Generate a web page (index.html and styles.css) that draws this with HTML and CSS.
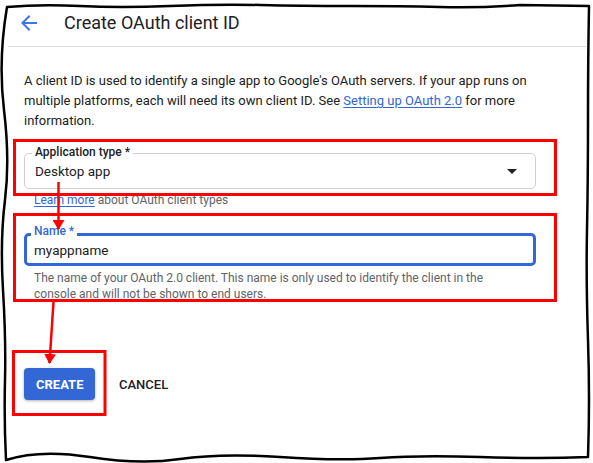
FILE: index.html
```html
<!DOCTYPE html>
<html lang="en">
<head>
<meta charset="utf-8">
<title>Create OAuth client ID</title>
<link rel="stylesheet" href="styles.css">
</head>
<body>
<div class="page">
  <div class="sheet">
    <header class="topbar">
      <svg class="back" width="24" height="24" viewBox="0 0 24 24" aria-hidden="true">
        <path d="M20 11H7.83l5.59-5.59L12 4l-8 8 8 8 1.41-1.41L7.83 13H20v-2z"/>
      </svg>
      <h1 class="title">Create OAuth client ID</h1>
    </header>
    <main class="content">
      <p class="intro">A client ID is used to identify a single app to Google's OAuth servers. If your app runs on multiple platforms, each will need its own client ID. See <a class="link" href="#">Setting up OAuth 2.0</a> for more information.</p>

      <div class="field select-field">
        <span class="field-label">Application type *</span>
        <span class="field-value">Desktop app</span>
        <span class="caret"></span>
      </div>
      <div class="hint"><a class="hint-link" href="#">Learn more</a> about OAuth client types</div>

      <div class="field input-field">
        <span class="field-label focused">Name *</span>
        <span class="field-value">myappname</span>
      </div>
      <div class="helper">The name of your OAuth 2.0 client. This name is only used to identify the client in the console and will not be shown to end users.</div>

      <div class="actions">
        <button class="btn btn-primary">CREATE</button>
        <button class="btn btn-text">CANCEL</button>
      </div>
    </main>
  </div>

  <svg class="overlay" width="593" height="463" viewBox="0 0 593 463" aria-hidden="true">
    <defs>
      <marker id="head" viewBox="0 0 10 12" refX="9" refY="6" markerWidth="10" markerHeight="12" markerUnits="userSpaceOnUse" orient="auto">
        <path d="M0 0 L10 6 L0 12 z" fill="#ff0000"/>
      </marker>
    </defs>
    <g fill="none" stroke="#ff0000" stroke-width="3">
      <rect x="14.5" y="140.5" width="541" height="54"/>
      <rect x="14.5" y="214.5" width="541" height="86"/>
      <rect x="13.5" y="351.5" width="91.5" height="63"/>
    </g>
    <g stroke="#ff0000" stroke-width="2.5" fill="none">
      <line x1="58.5" y1="182" x2="58.5" y2="229" marker-end="url(#head)"/>
      <line x1="53.5" y1="302" x2="49.5" y2="363" marker-end="url(#head)"/>
    </g>
    <path class="frame-line" d="M7 7 Q40 4 80 6 T170 6 T260 5 T350 6 T440 7 T520 5 L589 6 Q588 60 588 120 T587 230 T588 340 T588 457 Q540 459 480 457 T380 458 T280 457 T180 459 T90 457 T6 460 Q4 420 5 380 T3 290 T5 200 T4 110 T7 7 Z"/>
  </svg>
</div>
</body>
</html>
```

FILE: styles.css
```css
html, body {
  margin: 0;
  padding: 0;
  background: #ffffff;
}

body {
  font-family: Roboto, "Liberation Sans", Arial, sans-serif;
  color: #202124;
}

.page {
  position: relative;
  width: 593px;
  height: 463px;
  overflow: hidden;
  background: #ffffff;
}

.sheet {
  margin: 0 7px 0 8px;
}

.topbar {
  display: flex;
  align-items: center;
  height: 47px;
  border-bottom: 1px solid #dadce0;
  box-sizing: border-box;
  padding-left: 9px;
}

.back {
  fill: #3b78e7;
  flex: none;
}

.title {
  margin: 0 0 0 23px;
  font-size: 18px;
  font-weight: 400;
  color: #202124;
  line-height: 24px;
}

.content {
  padding: 24px 0 0 16px;
}

.intro {
  margin: 0;
  width: 548px;
  font-size: 13px;
  line-height: 20px;
  color: #202124;
}

.link {
  color: #3367d6;
  text-decoration: underline;
  text-underline-offset: 2px;
}

.field {
  position: relative;
  width: 512px;
  box-sizing: border-box;
  display: flex;
  align-items: center;
}

.select-field {
  margin-top: 22px;
  height: 36px;
  border: 1px solid #cfcfcf;
  border-radius: 5px;
  padding: 0 10px;
}

.input-field {
  margin-top: 25px;
  height: 33px;
  border: 3px solid #3367d6;
  border-radius: 5px;
  padding: 0 7px;
}

.field-label {
  position: absolute;
  left: 7px;
  top: -9px;
  padding: 0 3px;
  background: #ffffff;
  font-size: 12px;
  line-height: 14px;
  font-weight: 500;
  color: #202124;
}

.field-label.focused {
  left: 4px;
  top: -12px;
  color: #3367d6;
}

.field-value {
  font-size: 13.5px;
  color: #202124;
}

.caret {
  margin-left: auto;
  margin-right: 8px;
  width: 0;
  height: 0;
  border-left: 5px solid transparent;
  border-right: 5px solid transparent;
  border-top: 5px solid #202124;
}

.hint {
  margin-top: 3px;
  padding-left: 10px;
  font-size: 12px;
  line-height: 16px;
  color: #5f6368;
}

.hint-link {
  color: #3367d6;
  text-decoration: underline;
  text-underline-offset: 2px;
}

.helper {
  margin-top: 4px;
  width: 492px;
  padding-left: 10px;
  font-size: 12px;
  line-height: 16px;
  color: #5f6368;
}

.actions {
  display: flex;
  align-items: center;
  gap: 0;
  margin-top: 66px;
}

.btn {
  font-family: Roboto, "Liberation Sans", Arial, sans-serif;
  font-size: 13px;
  height: 32px;
  border: none;
  border-radius: 4px;
  padding: 0 12px;
  cursor: pointer;
}

.btn-primary {
  width: 71px;
  background: #3367d6;
  color: #ffffff;
  font-weight: 700;
  box-shadow: 0 1px 3px rgba(0, 0, 0, 0.3);
}

.btn-text {
  margin-left: 12px;
  background: transparent;
  color: #202124;
  font-weight: 500;
}

.overlay {
  position: absolute;
  left: 0;
  top: 0;
  pointer-events: none;
}

.frame-line {
  fill: none;
  stroke: #000000;
  stroke-width: 2.5;
  stroke-linejoin: round;
}
```
